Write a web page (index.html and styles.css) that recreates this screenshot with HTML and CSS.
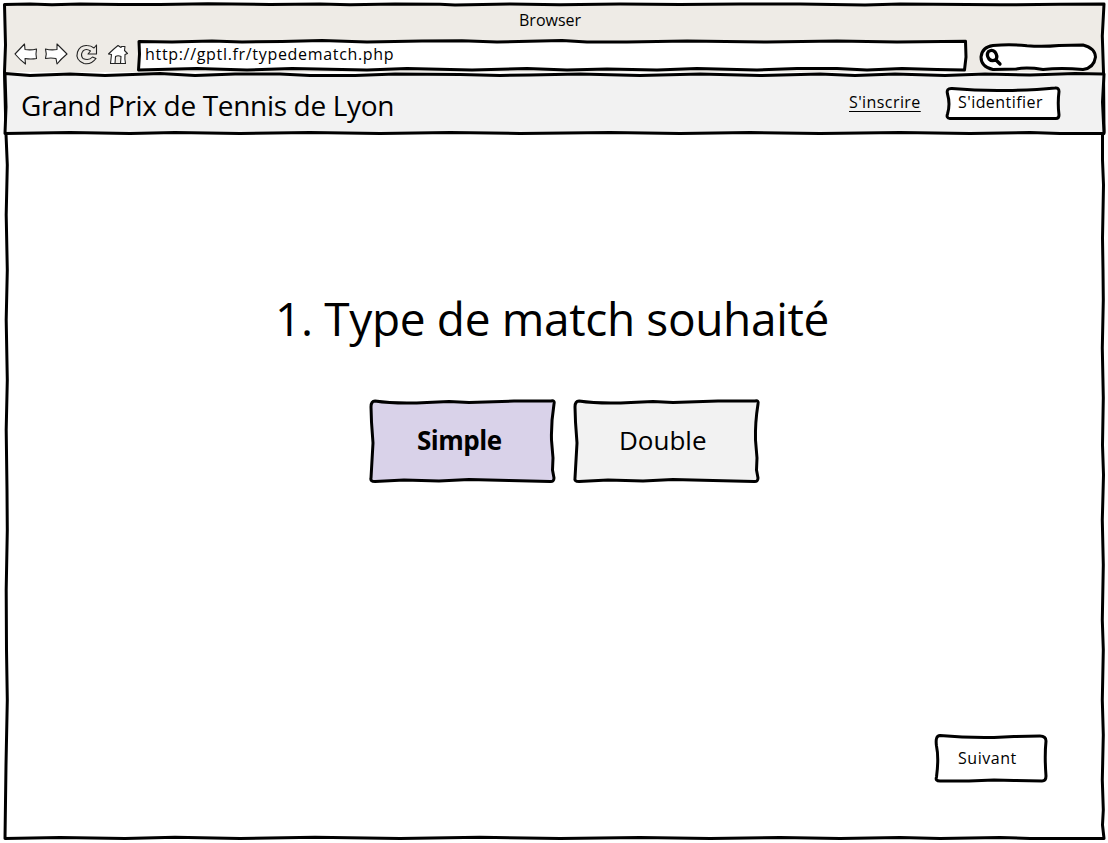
FILE: index.html
```html
<!DOCTYPE html>
<html lang="fr">
<head>
<meta charset="utf-8">
<title>Grand Prix de Tennis de Lyon</title>
<link rel="stylesheet" href="styles.css">
</head>
<body>
<div class="window">
  <svg class="sketch" viewBox="0 0 1108 843">
    <path d="M4.500 4.500L30 4L52 4.800L80 4L120 4.600L160 4.500L208 3.800L270 4.500L320 4L350 4.800L395 4L440 4.300L455 5L510 4L560 4.800L620 4L680 4.500L740 4L800 4L865 5L900 4L1000 4.800L1060 4.300L1104 4L1102.300 36L1103.500 72L1104 132L1102.500 135L1102.500 160L1103.500 185L1102.500 238L1103 270L1103.300 300L1102.300 348L1103.300 398L1102.500 445L1103.500 475L1102.300 520L1103.300 565L1102.300 620L1103.300 650L1102.300 700L1103.300 735L1102.300 780L1103.300 810L1102.500 825L1104 838.500L1030 838.500L1000 837.500L940 838.500L900 837.500L840 838.500L780 837.500L710 838.500L640 837.500L560 838.500L480 837.300L400 838.500L315 837.300L240 838.500L175 837.300L125 838.500L60 837.500L5 838.500L6 765L7.300 700L6.500 650L6.200 590L7.300 530L7 490L6.200 430L7.300 380L6.200 320L7.300 270L6.200 215L7.300 165L6 134L4.500 72L5.500 45L5 25Z"/>
  </svg>
  <div class="chrome">
    <div class="title">Browser</div>
    <div class="toolbar">
      <svg class="nav" viewBox="0 0 120 28">
        <path d="M1 14L10.500 4L11 9.500Q17 10.500 22.500 9Q21.500 14 22.500 18.500Q17 19.500 11 18.500L11.500 24Q6 20 1 14Z"/>
        <path d="M53 14L43 4L43 9.500Q37 10.500 31.500 9Q33 14 31.500 18.500Q37 17.500 42 18.500L43 24Q47 19 53 14Z"/>
        <path class="reload" d="M82.500 5L82.500 14L74 14L76.500 11Q72 8 69 11Q66 15 69 18.500Q75 21 78.500 17L82 18.500Q77 25 70 23.500Q61 20 63.500 12Q66 5 73 5.500Q77 5.500 80 8Z"/>
        <path d="M94.500 14Q99 9.500 104 5.500L107 7.500L107.500 6.500L111 6.500L110.500 10.500L113.500 13.500L111 14.500Q110.500 19 111.500 23.500L106.500 23.500L107 16.500Q104 15 101.500 16.500L101 23.500L96.500 23.500L97.500 14.500ZM101 23.500L106.500 23.500"/>
      </svg>
      <div class="address">
        <svg class="sketch" viewBox="0 0 831 33">
          <path class="white" d="M2 2.500L35 3L75 2L105 3L145 2.500L185 1.500L230 3L285 2L325 1.800L360 3L425 1.500L450 3L490 3L550 2L630 3L700 2L760 3L828.500 2.200L829 18L827.500 31L800 30.500L765 29.500L730 31L700 29.500L660 29.500L620 31L560 29.500L520 31L470 30L430 31L390 29.500L335 31L270 29.500L230 31L155 29.500L110 31L60 29.500L1.500 31L2.500 15Z"/>
        </svg>
        <span>http://gptl.fr/typedematch.php</span>
      </div>
      <svg class="search" viewBox="0 0 118 30">
        <path class="white" d="M14 3.500Q32 2 48 3.800Q64 5 80 3.500L104 3Q116 6 116.500 15Q115 26 104 27.500Q82 25.500 64 27.500Q48 25 37 27L14 27.500Q2 25 2 15Q3 5 14 3.500Z"/>
        <path class="lens" d="M9.500 9.500Q13 7 16 10Q19 14 17 17.500Q13 20 10 17Q7 13 9.500 9.500ZM17 18L21 22"/>
      </svg>
    </div>
  </div>
  <header class="header">
    <svg class="sketch" viewBox="0 0 1108 62">
      <path class="grey" d="M5 1.500L30 3.500L70 2L105 3.500L160 1.500L195 3.500L235 2L280 2L310 3.500L355 3.500L395 2L460 2.500L500 3.500L530 3L580 2L640 3.500L700 2L760 3.500L820 2L855 3.500L895 2L945 3.500L985 2L1030 3L1075 1.500L1104 2L1102.500 30L1104 61.500L1060 61.500L1030 60.500L970 61.500L900 60.500L820 61.500L750 60.500L680 61.500L610 60.500L520 61.500L450 60.500L380 61.500L310 60.500L240 61.500L175 60.500L130 61.500L70 60.500L5 61.500L6 35Z"/>
    </svg>
    <h1 class="brand">Grand Prix de Tennis de Lyon</h1>
    <a class="signup">S'inscrire</a>
    <a class="button login">
      <svg class="sketch" viewBox="0 0 116 36">
        <path class="white" d="M7 3.500Q34 6 62 5.500Q90 5 110 3Q114 2.500 114 6.500Q112.500 18 114 30Q114 33.500 111 33.500L60 33.500L5 33.500Q1 33 2.500 29Q5.500 19 2.500 9Q1 3 7 3.500Z"/>
      </svg>
      <span>S'identifier</span>
    </a>
  </header>
  <main class="main">
    <h2 class="question">1. Type de match souhaité</h2>
    <div class="choices">
      <a class="button choice selected">
        <svg class="sketch" viewBox="0 0 188 86">
          <path class="lilac" d="M6 3Q26 6 58 4.500L80 3.500L100 4.500L145 3L182 3Q186 2 185 6Q182 25 182.500 42L184 60L183.500 72L185 80Q185 84 181 83.500L140 82.500L100 81.500L70 83L35 82L6 83.500Q1 83.500 2 80L4 45L2.500 24L2 9Q2 3 6 3Z"/>
        </svg>
        <span>Simple</span>
      </a>
      <a class="button choice">
        <svg class="sketch" viewBox="0 0 188 86">
          <path class="grey" d="M6 3Q26 6 58 4.500L80 3.500L100 4.500L145 3L182 3Q186 2 185 6Q182 25 182.500 42L184 60L183.500 72L185 80Q185 84 181 83.500L140 82.500L100 81.500L70 83L35 82L6 83.500Q1 83.500 2 80L4 45L2.500 24L2 9Q2 3 6 3Z"/>
        </svg>
        <span>Double</span>
      </a>
    </div>
    <a class="button next">
      <svg class="sketch" viewBox="0 0 114 50">
        <path class="white" d="M6 2.500Q32 5 60 4.500L80 3.500L106 3Q112 3 112 8Q110.500 23 112 43Q112 48 108 48L80 47.500L60 47L35 48L6 48Q1 48 2.500 44Q5 25 2.500 13Q1 2.500 6 2.500Z"/>
      </svg>
      <span>Suivant</span>
    </a>
  </main>
</div>
</body>
</html>
```
FILE: styles.css
```css
* { box-sizing: border-box; }
body {
  margin: 0;
  background: #fff;
  color: #000;
  font: 400 16px/24px "Open Sans", "Noto Sans", sans-serif;
}
.window {
  position: relative;
  display: flex;
  flex-direction: column;
  width: 1108px;
  height: 843px;
}
/* Hand-drawn outline laid behind the content of its box */
.sketch {
  position: absolute;
  inset: 0;
  width: 100%;
  height: 100%;
  overflow: visible;
}
path {
  fill: none;
  stroke: #000;
  stroke-width: 3;
  stroke-linejoin: round;
  stroke-linecap: round;
}
.white { fill: #fff; }
.grey { fill: #f2f2f2; }
.lilac { fill: #d9d2e9; }
span, h1, .signup { position: relative; }
.chrome {
  height: 72px;
  padding: 8px 10px 0 14px;
  background: linear-gradient(#eeebe6, #eeebe6) 6px 5px / 1097px 67px no-repeat;
}
.title {
  height: 31px;
  padding-left: 505px;
}
.toolbar { display: flex; }
.nav { width: 120px; height: 28px; margin-top: 1px; }
.nav path { fill: #fff; stroke: #222; stroke-width: 1.1; }
.nav .reload { fill: #eeebe6; }
.address {
  position: relative;
  width: 831px;
  height: 33px;
  margin-left: 3px;
  padding: 3px 0 0 8px;
  letter-spacing: .68px;
}
.search { width: 118px; height: 30px; margin: 3px 0 0 11px; }
.search .lens { stroke-width: 3.3; }
.header {
  position: relative;
  display: flex;
  height: 62px;
  padding-left: 21px;
}
.brand {
  width: 828px;
  margin: 12px 0 0;
  font-size: 28px;
  font-weight: 400;
  line-height: 42px;
  letter-spacing: -.33px;
}
.signup {
  width: 97px;
  margin-top: 18px;
  letter-spacing: .42px;
  text-decoration: underline;
  text-underline-offset: 3px;
}
.button { position: relative; display: block; }
.login { width: 116px; height: 36px; margin: 13px 0 0 -1px; padding: 5px 0 0 13px; letter-spacing: .44px; }
.main { display: flex; flex-direction: column; flex: 1; }
.question {
  margin: 149px 0 0 275px;
  font-size: 46px;
  font-weight: 400;
  line-height: 70px;
  letter-spacing: -.35px;
}
.choices { display: flex; gap: 16px; margin: 45px 0 0 369px; }
.choice {
  width: 188px;
  height: 86px;
  padding: 23px 0 0 46px;
  font-size: 26px;
  line-height: 38px;
}
.selected { padding-left: 48px; font-weight: 700; letter-spacing: -.5px; }
.next { width: 114px; height: 50px; margin: 249px 0 0 934px; padding: 13px 0 0 24px; letter-spacing: .55px; }
```
